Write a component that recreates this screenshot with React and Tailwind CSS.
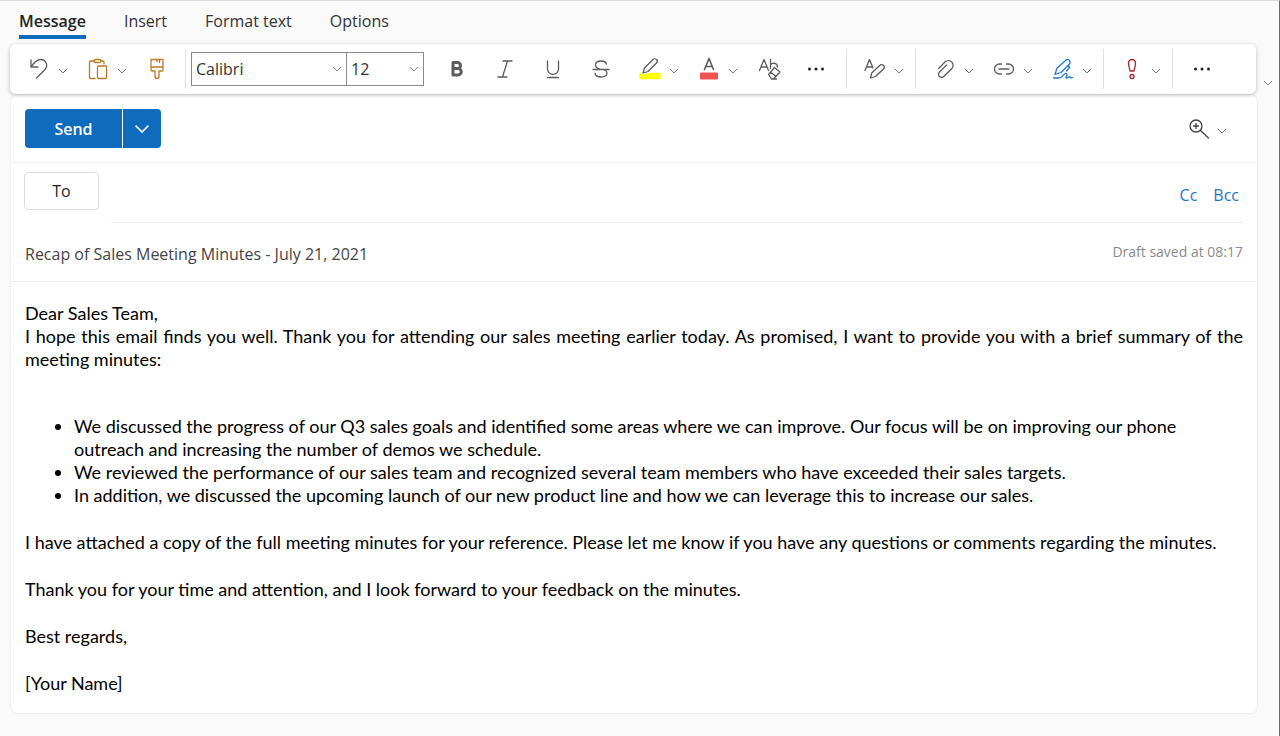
import { useState } from 'react'

const TABS = ['Message', 'Insert', 'Format text', 'Options']

const BULLETS = [
  'We discussed the progress of our Q3 sales goals and identified some areas where we can improve. Our focus will be on improving our phone outreach and increasing the number of demos we schedule.',
  'We reviewed the performance of our sales team and recognized several team members who have exceeded their sales targets.',
  'In addition, we discussed the upcoming launch of our new product line and how we can leverage this to increase our sales.',
]

// thin outline icon on a 24px grid
function Icon({ children, className = 'text-[#5c5c5c]' }) {
  return (
    <svg className={`size-6 shrink-0 ${className}`} viewBox="0 0 24 24" fill="none" stroke="currentColor" strokeWidth="1.3" strokeLinecap="round" strokeLinejoin="round" aria-hidden="true">
      {children}
    </svg>
  )
}

function Chevron({ className = 'w-[10px] text-[#767676]' }) {
  return (
    <svg className={`shrink-0 ${className}`} viewBox="0 0 10 6" fill="none" stroke="currentColor" strokeWidth="1" aria-hidden="true">
      <path d="M1 1l4 4 4-4" />
    </svg>
  )
}

function ToolButton({ label, className = 'w-12', children }) {
  return (
    <button type="button" aria-label={label} className={`flex h-full shrink-0 items-center justify-center ${className}`}>
      {children}
    </button>
  )
}

// icon button with its drop-down arrow
function SplitButton({ label, className = 'w-[59px]', children }) {
  return (
    <div className={`flex h-full shrink-0 items-center justify-center gap-[7px] ${className}`}>
      <button type="button" aria-label={label}>{children}</button>
      <button type="button" aria-label={`${label} options`} className="flex pt-1"><Chevron /></button>
    </div>
  )
}

function Divider() {
  return <div className="h-10 w-px shrink-0 bg-[#e1e1e1]" />
}

function Dots() {
  return (
    <svg className="size-6 text-[#1f1f1f]" viewBox="0 0 24 24" fill="currentColor" aria-hidden="true">
      <circle cx="5.500" cy="12" r="1.500" />
      <circle cx="12" cy="12" r="1.500" />
      <circle cx="18.500" cy="12" r="1.500" />
    </svg>
  )
}

function ToolSelect({ label, value, className }) {
  return (
    <div className={`flex h-[34px] shrink-0 items-center border border-[#8a8a8a] ${className}`}>
      <select aria-label={label} defaultValue={value} className="h-full w-full appearance-none bg-transparent pl-1 text-base text-[#333]">
        <option>{value}</option>
      </select>
      <Chevron className="mr-1 w-[10px] text-[#8a8a8a]" />
    </div>
  )
}

function Toolbar() {
  return (
    <div className="flex h-[50px] min-w-0 flex-1 items-center overflow-hidden rounded-md bg-white pl-2 shadow-[0_1px_4px_rgba(0,0,0,0.25)]">
      <SplitButton label="Undo">
        <Icon><path d="M4 3v7h7M4.300 9.700C7 5.500 10 2.500 13.500 2.500c5.500 0 8 6 4.500 10L9.500 21" /></Icon>
      </SplitButton>
      <SplitButton label="Paste">
        <Icon className="text-[#bd7a26]">
          <path d="M8.500 4H4.500a1 1 0 0 0-1 1v15.500a1 1 0 0 0 1 1H9M14.500 4H17a1 1 0 0 1 1 1v2" />
          <rect x="8" y="2.500" width="7" height="3" rx="1.500" />
          <rect x="11.500" y="9" width="9" height="12.500" rx="1" />
        </Icon>
      </SplitButton>
      <ToolButton label="Format painter" className="w-[49px] pr-2">
        <Icon className="text-[#bd7a26]"><path d="M6 2.500h12v10.500a1 1 0 0 1-1 1h-3V19.500a2 2 0 0 1-4 0V14H7a1 1 0 0 1-1-1zM6 10h12M14.500 2.500V5.500M12 2.500v2" /></Icon>
      </ToolButton>
      <Divider />
      <ToolSelect label="Font" value="Calibri" className="ml-[5px] w-[156px]" />
      <ToolSelect label="Font size" value="12" className="-ml-px mr-[9px] w-[78px]" />
      <ToolButton label="Bold">
        <Icon><path strokeWidth="3" d="M8 5.500h4.500a3 3 0 0 1 0 6H8zM8 11.500h5a3.200 3.200 0 0 1 0 6.500H8z" /></Icon>
      </ToolButton>
      <ToolButton label="Italic">
        <Icon><path d="M10 4h9M5 20h9M14.500 4l-5 16" /></Icon>
      </ToolButton>
      <ToolButton label="Underline">
        <Icon><path d="M6.500 4v8a5.500 5.500 0 0 0 11 0V4M6.500 20.500h11" /></Icon>
      </ToolButton>
      <ToolButton label="Strikethrough">
        <Icon><path d="M17.500 7c-.5-2-2.500-3-5.500-3s-5.500 1.200-5.500 4c0 2 1.500 3.200 4 4M4 12.500h16M14 12.500c2.500.8 4 1.700 4 3.500 0 3-3 4-6 4s-5.500-1.200-6-3.500" /></Icon>
      </ToolButton>
      <SplitButton label="Highlight" className="ml-1 w-[59px]">
        <Icon>
          <path d="M2 16.500h20v5h-20z" fill="#ffff00" stroke="#ffff00" />
          <path fill="#fff" stroke="#fff" strokeWidth="3" d="M5 16l1.500-5L15 2.500a2.300 2.300 0 0 1 3.500 3.500L10 14.500z" />
          <path fill="#fff" d="M5 16l1.500-5L15 2.500a2.300 2.300 0 0 1 3.500 3.500L10 14.500z" />
        </Icon>
      </SplitButton>
      <SplitButton label="Font color">
        <Icon>
          <path d="M4 16.500h16v5h-16z" strokeWidth="2" fill="#ef5350" stroke="#ef5350" />
          <path strokeWidth="1.600" d="M7.500 12.500L12 1.500l4.500 11M9 9.500h6" />
        </Icon>
      </SplitButton>
      <ToolButton label="Clear formatting" className="w-[45px]">
        <Icon>
          <path d="M1.500 13.500L6 2.500 10.500 13.500M3 10h6M12.500 2.500v9M12.500 8c2-3 7-2 7 2" />
          <path d="M10.500 17.500l6-7 5.500 4.500-6.500 7h-2zM12.500 15l5.500 4.500M13.500 22h5" />
        </Icon>
      </ToolButton>
      <ToolButton label="More formatting"><Dots /></ToolButton>
      <div className="w-1.5 shrink-0" />
      <Divider />
      <SplitButton label="Styles" className="w-[68px] pl-1">
        <Icon>
          <path d="M2 13.500L6.500 2.500 10 11M3.500 10h6" />
          <path d="M7.500 21l1.200-5 8-7.500a2.400 2.400 0 0 1 3.800 3.500L12.500 19.500z" />
        </Icon>
      </SplitButton>
      <Divider />
      <div className="w-2 shrink-0" />
      <SplitButton label="Attach file">
        <Icon><path d="M5.500 11.500l6.500-6.500a4.700 4.700 0 0 1 6.700 6.700l-8 7.800a3 3 0 0 1-4.300-4.300l7.300-7.300" /></Icon>
      </SplitButton>
      <SplitButton label="Insert link">
        <Icon><path d="M9.500 7H7.500a5 5 0 0 0 0 10h2M14.500 7h2a5 5 0 0 1 0 10h-2M7 12h10" /></Icon>
      </SplitButton>
      <SplitButton label="Signature">
        <Icon className="text-[#1f78d1]">
          <path d="M4 17.500l2-6.500L14.500 3.500a2.500 2.500 0 0 1 4 3.500L10 15.500zM17.500 8.500l1 2-3 3.500" />
          <path d="M2.500 21h5c5 0 5-5.500 8-4.500 2 1-2 4.500 0 4.500s2.500-2 3.500-1 1.500 1 2.500.5" />
        </Icon>
      </SplitButton>
      <div className="w-0.5 shrink-0" />
      <Divider />
      <SplitButton label="Importance" className="w-[68px] pl-1">
        <Icon className="text-[#a4262c]">
          <path d="M8.500 6a3.500 3.500 0 0 1 7 0c0 3-1 5-1.500 8h-4C9.500 11 8.500 9 8.500 6z" />
          <circle cx="12" cy="19.500" r="2" />
        </Icon>
      </SplitButton>
      <Divider />
      <ToolButton label="More options" className="w-[58px]"><Dots /></ToolButton>
    </div>
  )
}

export default function App() {
  const [tab, setTab] = useState('Message')

  return (
    <div className="min-h-screen border-t border-r border-t-[#dadada] border-r-[#6b6b6b] bg-[#fafafa] pb-[22px] font-['Open_Sans',sans-serif] text-[#333]">
      <nav className="flex h-[43px] items-start gap-[38px] pl-[19px]">
        {TABS.map(t => (
          <button
            key={t}
            type="button"
            onClick={() => setTab(t)}
            className={`h-[38px] border-b-4 pt-1.5 text-base ${tab === t ? 'border-[#0f6cbd] font-semibold text-[#242424]' : 'border-transparent'}`}
          >
            {t}
          </button>
        ))}
      </nav>

      <div className="relative flex items-end pl-[10px]">
        <Toolbar />
        <button type="button" aria-label="Collapse ribbon" className="flex w-[23px] justify-center pb-2"><Chevron /></button>
      </div>

      <main className="mr-[21px] ml-[10px] rounded-lg border border-[#f0f0f0] bg-white">
        <div className="flex h-[68px] items-center justify-between border-b border-[#f0f0f0] pr-[30px] pl-[14px]">
          <div className="flex h-[39px] gap-px text-white">
            <button type="button" className="w-[97px] rounded-l-[4px] bg-[#0f6cbd] text-base font-semibold">Send</button>
            <button type="button" aria-label="Send options" className="flex w-[38px] items-center justify-center rounded-r-[4px] bg-[#0f6cbd]">
              <Chevron className="w-4" />
            </button>
          </div>
          <div className="flex items-center gap-1.5">
            <button type="button" aria-label="Zoom">
              <Icon className="text-[#424242]"><path d="M15 9a6 6 0 1 1-12 0 6 6 0 0 1 12 0zM13.500 13.500l8 7.500M9 6.500v5M6.500 9h5" /></Icon>
            </button>
            <button type="button" aria-label="Zoom options" className="flex pt-1"><Chevron /></button>
          </div>
        </div>

        <div className="flex h-[60px] gap-3 pr-[14px] pl-[13px]">
          <button type="button" className="mt-[9px] h-[38px] w-[75px] rounded-[4px] border border-[#dcdcdc] text-base font-medium text-[#242424]">To</button>
          <div className="flex flex-1 items-center border-b border-[#ededed] pt-1 pr-1">
            <input type="text" aria-label="To recipients" className="h-full min-w-0 flex-1 outline-none" />
            <button type="button" className="text-base text-[#2b74c4]">Cc</button>
            <button type="button" className="ml-4 text-base text-[#2b74c4]">Bcc</button>
          </div>
        </div>

        <div className="flex h-[59px] items-center border-b border-[#ededed] px-[14px]">
          <input type="text" aria-label="Subject" defaultValue="Recap of Sales Meeting Minutes - July 21, 2021" className="min-w-0 flex-1 pt-1 text-base text-[#444] outline-none" />
          <span className="text-sm text-[#8a8a8a]">Draft saved at 08:17</span>
        </div>

        <article className="px-[14px] pt-[20px] pb-[18px] font-['Lato',sans-serif] text-[18px] leading-[23px] text-black">
          <p>Dear Sales Team,</p>
          <p className="text-justify">
            I hope this email finds you well. Thank you for attending our sales meeting earlier today. As promised, I want to provide you with a brief summary of the meeting minutes:
          </p>
          <ul className="mt-11 list-disc pl-[49px]">
            {BULLETS.map(b => <li key={b}>{b}</li>)}
          </ul>
          <p className="mt-6">I have attached a copy of the full meeting minutes for your reference. Please let me know if you have any questions or comments regarding the minutes.</p>
          <p className="mt-6">Thank you for your time and attention, and I look forward to your feedback on the minutes.</p>
          <p className="mt-6">Best regards,</p>
          <p className="mt-6">[Your Name]</p>
        </article>
      </main>
    </div>
  )
}
